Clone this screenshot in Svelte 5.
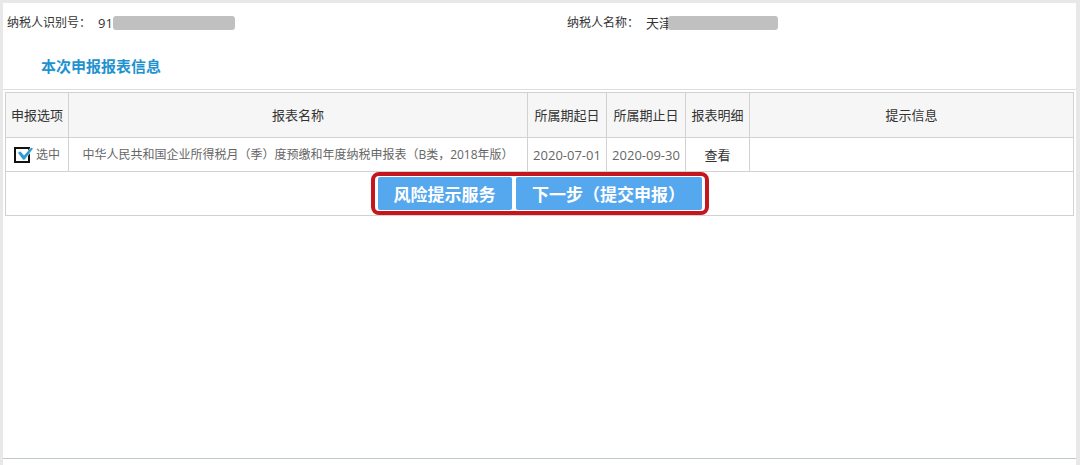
<script lang="ts">
    let reports = $state([
        {
            id: 'sb-1',
            checked: true,
            name: '中华人民共和国企业所得税月（季）度预缴和年度纳税申报表（B类，2018年版）',
            start: '2020-07-01',
            end: '2020-09-30',
            message: ''
        }
    ]);
</script>

<div class="frame">
    <main>
        <div class="taxpayer">
            <div class="field">
                <span>纳税人识别号：</span>
                <span class="value">91</span>
                <span class="mask"></span>
            </div>
            <div class="field">
                <span>纳税人名称：</span>
                <span class="value">天津</span>
                <span class="mask name-mask"></span>
            </div>
        </div>

        <h1>本次申报报表信息</h1>

        <div class="list">
            <table>
                <colgroup>
                    <col class="col-option">
                    <col class="col-name">
                    <col class="col-date">
                    <col class="col-date">
                    <col class="col-detail">
                    <col>
                </colgroup>
                <thead>
                    <tr>
                        <th>申报选项</th>
                        <th>报表名称</th>
                        <th>所属期起日</th>
                        <th>所属期止日</th>
                        <th>报表明细</th>
                        <th>提示信息</th>
                    </tr>
                </thead>
                <tbody>
                    {#each reports as report}
                        <tr>
                            <td>
                                <label for={report.id}>
                                    <span class="check">
                                        <input type="checkbox" id={report.id} bind:checked={report.checked}>
                                        {#if report.checked}
                                            <svg viewBox="0 0 20 16" aria-hidden="true">
                                                <path d="M3.5 5.6 L6.6 4.2 L10 8.2 L17 0.4 L19.4 1.4 L10.6 13 L9 13 Z" fill="#2d9bd3" stroke="#fff" stroke-width="0.6" />
                                            </svg>
                                        {/if}
                                    </span>
                                    选中
                                </label>
                            </td>
                            <td class="name">{report.name}</td>
                            <td>{report.start}</td>
                            <td>{report.end}</td>
                            <td><a href="#detail">查看</a></td>
                            <td>{report.message}</td>
                        </tr>
                    {/each}
                </tbody>
                <tfoot>
                    <tr>
                        <td colspan="6">
                            <div class="actions">
                                <button type="button">风险提示服务</button>
                                <button type="button" class="next">下一步（提交申报）</button>
                            </div>
                        </td>
                    </tr>
                </tfoot>
            </table>
        </div>

        <footer></footer>
    </main>
</div>

<style>
    :global(body) {
        background: #e8e8e8;
    }

    .frame {
        box-sizing: border-box;
        display: flex;
        min-height: 100vh;
        padding: 3px 4px 0 3px;
        background: #e8e8e8;
        font-family: "Open Sans", "Noto Sans CJK SC", sans-serif;
        color: #333;
    }

    main {
        flex: 1;
        display: flex;
        flex-direction: column;
        min-width: 0;
        background: #fff;
    }

    .taxpayer {
        display: grid;
        grid-template-columns: 560px 1fr;
        padding: 10px 4px 0;
        font-size: 12px;
        line-height: 20px;
    }

    .field {
        display: flex;
        align-items: center;
    }

    .value {
        margin-left: 7px;
        font-size: 13px;
    }

    .mask {
        width: 122px;
        height: 14px;
        border-radius: 3px;
        background: #c0c0c0;
    }

    .name-mask {
        width: 110px;
        margin-left: -4px;
    }

    h1 {
        margin: 22px 0 12px;
        padding-left: 38px;
        font-size: 15px;
        line-height: 22px;
        color: #1f93cf;
    }

    .list {
        border-top: 1px solid #dedede;
        padding: 2px 2px 0;
    }

    table {
        width: 100%;
        table-layout: fixed;
        border-collapse: collapse;
        font-size: 13px;
        line-height: 20px;
    }

    .col-option {
        width: 63px;
    }

    .col-name {
        width: 459px;
    }

    .col-date {
        width: 79px;
    }

    .col-detail {
        width: 64px;
    }

    th,
    td {
        padding: 0;
        border: 1px solid #d2d2d2;
        text-align: center;
        white-space: nowrap;
    }

    th {
        height: 44px;
        background: #f6f6f6;
        font-weight: 400;
    }

    td {
        height: 33px;
        color: #666;
    }

    td.name {
        font-size: 12px;
    }

    td a {
        color: #333;
        text-decoration: none;
    }

    label {
        display: flex;
        align-items: center;
        justify-content: center;
        gap: 6px;
        font-size: 12px;
    }

    .check {
        position: relative;
        display: flex;
    }

    .check input {
        appearance: none;
        box-sizing: border-box;
        width: 16px;
        height: 16px;
        margin: 0;
        border: 2px solid #111;
        background: #fff;
    }

    .check svg {
        position: absolute;
        top: 0;
        left: 0;
        width: 20px;
        height: 16px;
        pointer-events: none;
    }

    tfoot td {
        height: 43px;
    }

    .actions {
        position: relative;
        display: inline-flex;
        gap: 4px;
        vertical-align: middle;
    }

    /* red outline that calls attention to the two actions */
    .actions::after {
        content: "";
        position: absolute;
        inset: -5px -7px;
        border: 4px solid #c4161c;
        border-radius: 8px;
        pointer-events: none;
    }

    button {
        width: 134px;
        height: 33px;
        padding: 0;
        border: none;
        border-radius: 2px;
        background: #56a8ee;
        color: #fff;
        font-family: inherit;
        font-size: 17px;
        font-weight: 700;
        cursor: pointer;
    }

    .next {
        width: 186px;
    }

    footer {
        height: 6px;
        margin-top: auto;
        border-top: 1px solid #bccaca;
    }
</style>
